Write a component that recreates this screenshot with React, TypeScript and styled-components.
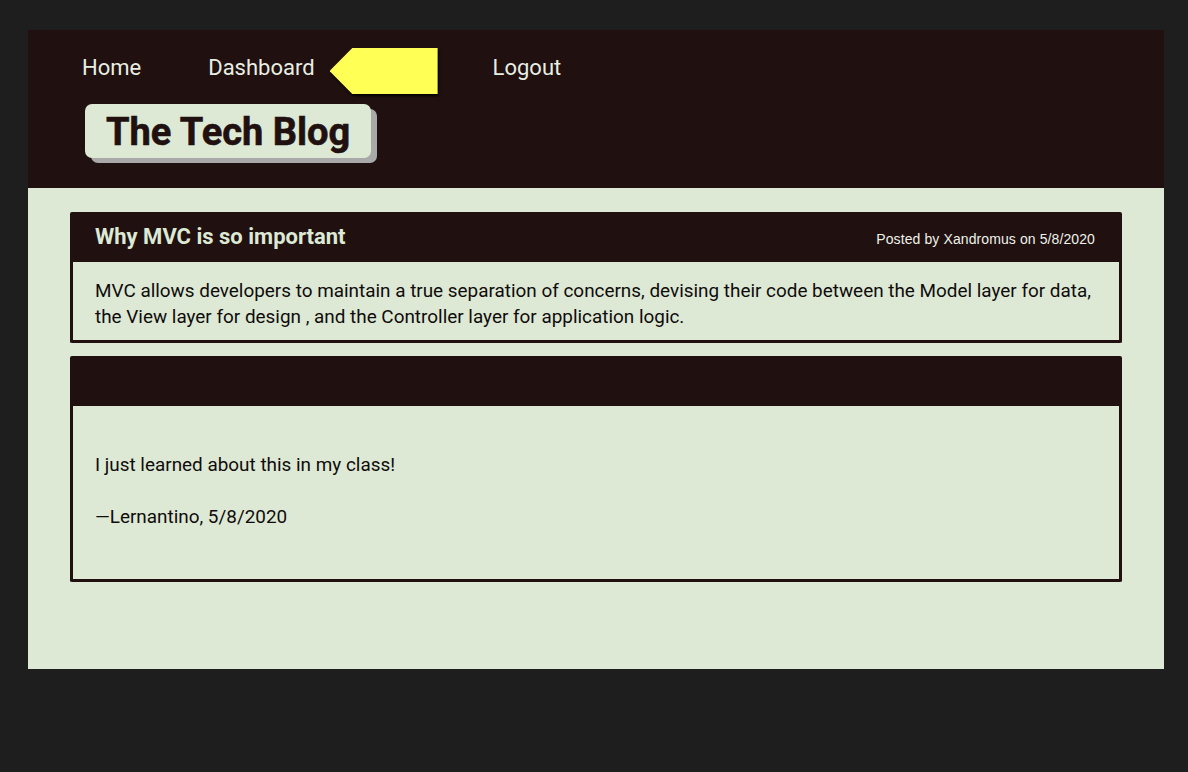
import React from "react";
import styled, { createGlobalStyle } from "styled-components";

const DARK = "#201010";
const LIGHT = "#dde9d5";

const Global = createGlobalStyle`
  html, body { margin: 0; padding: 0; background: #1e1e1e; }
  body { font-family: Roboto, "Noto Sans", sans-serif; }
  * { box-sizing: border-box; }
`;

const Page = styled.div`
  margin: 30px 24px 0 28px;
  width: 1136px;
  height: 639px;
  background: ${LIGHT};
  display: flex;
  flex-direction: column;
`;

const Header = styled.header`
  background: ${DARK};
  height: 158px;
  padding: 0 0 0 54px;
  display: flex;
  flex-direction: column;
`;

const Nav = styled.nav`
  display: flex;
  align-items: center;
  height: 74px;
  padding-top: 2px;
`;

const NavLink = styled.a<{ $gap?: number }>`
  font-family: Roboto, sans-serif;
  font-size: 22px;
  color: #e8eee2;
  text-decoration: none;
  margin-right: ${(p) => p.$gap ?? 0}px;
  line-height: 1;
`;

const Arrow = styled.span`
  display: block;
  width: 108px;
  height: 46px;
  margin: 6px 55px 0 15px;
  filter: drop-shadow(1px 2px 1px rgba(0, 0, 0, 0.9));
  &::before {
    content: "";
    display: block;
    width: 100%;
    height: 100%;
    background: #ffff55;
    clip-path: polygon(21% 0, 100% 0, 100% 100%, 21% 100%, 0 50%);
  }
`;

const LogoWrap = styled.div`
  padding-left: 3px;
`;

const Logo = styled.h1`
  display: inline-block;
  margin: 0;
  background: ${LIGHT};
  color: ${DARK};
  font-family: Roboto, sans-serif;
  font-weight: 700;
  font-size: 38px;
  line-height: 56px;
  height: 54px;
  padding: 0 21px 0 21px;
  border-radius: 7px;
  box-shadow: 6px 5px 0 #a9a9a9;
  -webkit-text-stroke: 0.6px ${DARK};
`;

const Main = styled.main`
  padding: 24px 42px 0 42px;
  display: flex;
  flex-direction: column;
  gap: 13px;
`;

const Card = styled.article`
  border: 3px solid ${DARK};
  border-top: none;
  border-radius: 2px;
  overflow: hidden;
`;

const CardHead = styled.div`
  background: ${DARK};
  height: 50px;
  display: flex;
  align-items: center;
  justify-content: space-between;
  margin: 0 -3px;
  padding: 0 27px 0 25px;
`;

const CardTitle = styled.h2`
  margin: 0;
  font-family: Roboto, sans-serif;
  font-weight: 700;
  font-size: 22px;
  color: ${LIGHT};
  padding-bottom: 2px;
`;

const Meta = styled.span`
  font-family: "Liberation Sans", Arial, sans-serif;
  font-size: 14px;
  letter-spacing: 0.1px;
  color: #eef2ea;
  padding-top: 4px;
`;

const CardBody = styled.div<{ $pad: string }>`
  padding: ${(p) => p.$pad};
  font-family: Roboto, sans-serif;
  font-size: 18.9px;
  line-height: 26px;
  color: #100c0c;
`;

const Para = styled.p`
  margin: 0 0 26px;
  &:last-child { margin-bottom: 0; }
`;

export default function App() {
  return (
    <>
      <Global />
      <Page>
        <Header>
          <Nav>
            <NavLink href="#" $gap={67}>Home</NavLink>
            <NavLink href="#">Dashboard</NavLink>
            <Arrow aria-hidden />
            <NavLink href="#">Logout</NavLink>
          </Nav>
          <LogoWrap>
            <Logo>The Tech Blog</Logo>
          </LogoWrap>
        </Header>
        <Main>
          <Card>
            <CardHead>
              <CardTitle>Why MVC is so important</CardTitle>
              <Meta>Posted by Xandromus on 5/8/2020</Meta>
            </CardHead>
            <CardBody $pad="16px 19px 10px 22px">
              MVC allows developers to maintain a true separation of concerns, devising their code between the Model layer for data, the View layer for design , and the Controller layer for application logic.
            </CardBody>
          </Card>
          <Card>
            <CardHead />
            <CardBody $pad="46px 19px 49px 22px">
              <Para>I just learned about this in my class!</Para>
              <Para>—Lernantino, 5/8/2020</Para>
            </CardBody>
          </Card>
        </Main>
      </Page>
    </>
  );
}
